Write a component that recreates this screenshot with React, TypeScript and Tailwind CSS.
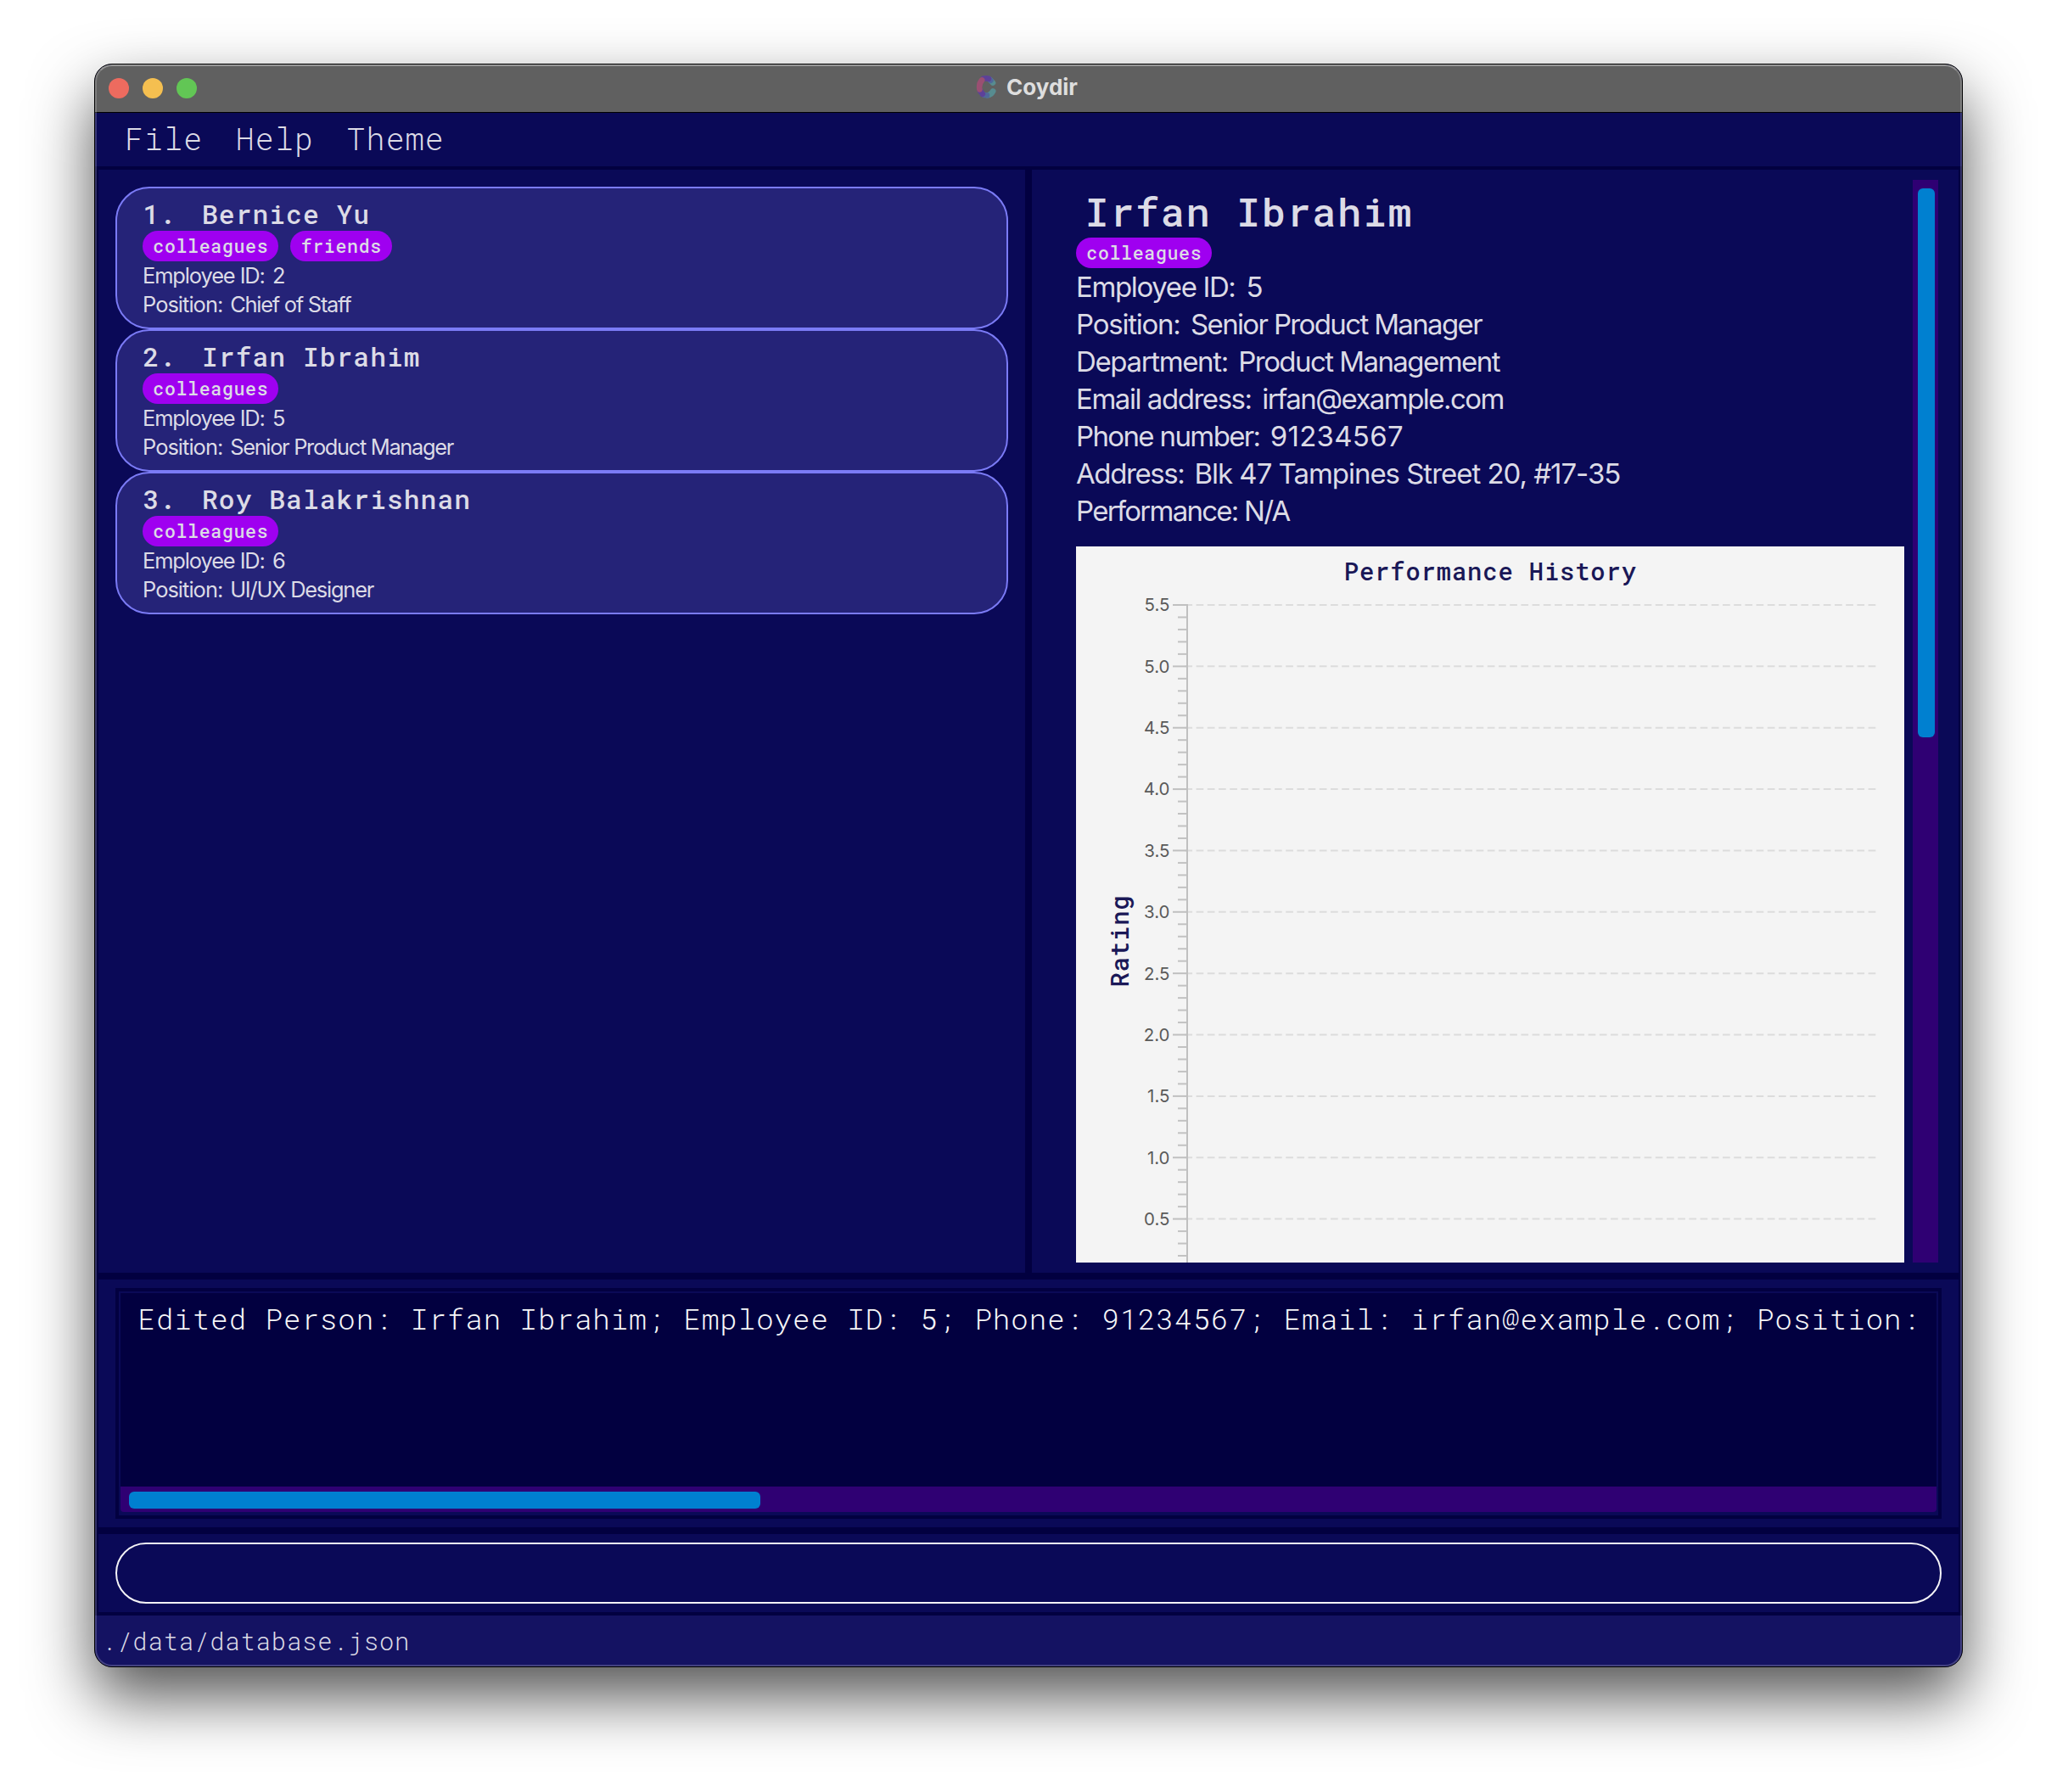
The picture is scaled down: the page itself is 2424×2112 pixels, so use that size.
import React from "react";

const MONO = "font-['Roboto_Mono','Liberation_Mono',monospace]";

type Person = {
  index: string;
  name: string;
  tags: string[];
  id: string;
  position: string;
  positionSpacing: string;
};

const people: Person[] = [
  {
    index: "1.",
    name: "Bernice Yu",
    tags: ["colleagues", "friends"],
    id: "2",
    position: "Chief of Staff",
    positionSpacing: "tracking-[-1.24px]",
  },
  {
    index: "2.",
    name: "Irfan Ibrahim",
    tags: ["colleagues"],
    id: "5",
    position: "Senior Product Manager",
    positionSpacing: "tracking-[-1.31px]",
  },
  {
    index: "3.",
    name: "Roy Balakrishnan",
    tags: ["colleagues"],
    id: "6",
    position: "UI/UX Designer",
    positionSpacing: "tracking-[-1.21px]",
  },
];

const details = [
  { label: "Employee ID:", labelClass: "w-[200.5px] tracking-[-1.37px]", value: "5", valueClass: "" },
  { label: "Position:", labelClass: "w-[135px] tracking-[-1.24px]", value: "Senior Product Manager", valueClass: "tracking-[-1.64px]" },
  { label: "Department:", labelClass: "w-[191.3px] tracking-[-1.36px]", value: "Product Management", valueClass: "tracking-[-1.56px]" },
  { label: "Email address:", labelClass: "w-[219.3px] tracking-[-1.45px]", value: "irfan@example.com", valueClass: "tracking-[-1.56px]" },
  { label: "Phone number:", labelClass: "w-[228.8px] tracking-[-1.63px]", value: "91234567", valueClass: "tracking-[0.27px]" },
  { label: "Address:", labelClass: "w-[139.5px] tracking-[-1.4px]", value: "Blk 47 Tampines Street 20, #17-35", valueClass: "tracking-[-1.03px]" },
  { label: "Performance: N/A", labelClass: "tracking-[-1.75px]", value: "", valueClass: "" },
];

function Tag({ label }: { label: string }) {
  return (
    <span
      className={`${MONO} flex h-9 items-center rounded-full bg-[#9f00f0] pr-[12px] pl-[12.3px] text-[21.5px] leading-none font-medium tracking-[0.7px]`}
    >
      {label}
    </span>
  );
}

function Logo() {
  return (
    <svg width="24" height="27" viewBox="0 0 24 27" fill="none" strokeWidth="6.6" strokeLinecap="round">
      <path d="M17 5.2 L20 8.6" stroke="#578c90" />
      <path d="M15.5 4 L17.4 5.8" stroke="#50689a" />
      <path d="M14 23.2 Q18 22.6 20.2 18.4" stroke="#578c90" />
      <path d="M8.5 22.4 Q10.5 23.4 13 23.3" stroke="#50689a" />
      <path d="M5 18 L7.8 21.8" stroke="#5d4199" />
      <path d="M8.8 3.8 Q12 3 15 3.8" stroke="#5d4199" />
      <path d="M7.2 5.4 Q3.2 9.6 4.4 16.4" stroke="#9a4f72" />
    </svg>
  );
}

function PersonCard({ person }: { person: Person }) {
  return (
    <div className="h-[168px] rounded-[40px] border-2 border-[#7b7bf6] bg-[#252378] px-[30px] py-[10px]">
      <div className={`${MONO} flex h-10 pl-[0.5px] text-[31.2px] leading-[40px] font-medium tracking-[1.1px]`}>
        <span className="w-[69.5px]">{person.index}</span>
        <span>{person.name}</span>
      </div>
      <div className="flex gap-[14px]">
        {person.tags.map((t) => (
          <Tag key={t} label={t} />
        ))}
      </div>
      <div className="flex text-[25.4px] leading-[34px]">
        <span className="w-[153px] tracking-[-1.09px]">Employee ID:</span>
        <span>{person.id}</span>
      </div>
      <div className="flex text-[25.4px] leading-[34px]">
        <span className="w-[103.2px] tracking-[-0.95px]">Position:</span>
        <span className={person.positionSpacing}>{person.position}</span>
      </div>
    </div>
  );
}

const MAJOR = 72.36;
const AXIS_TOP = 69;

function PerformanceChart() {
  const majors = Array.from({ length: 11 }, (_, i) => ({
    y: AXIS_TOP + i * MAJOR,
    label: (5.5 - i * 0.5).toFixed(1),
  }));
  const minors = Array.from({ length: 54 }, (_, i) => i).filter((i) => i % 5 !== 0);
  return (
    <svg width="976" height="844" viewBox="0 0 976 844" className="block bg-[#f4f4f4]">
      <text
        x="315.8"
        y="40"
        className="fill-[#1a1857] font-['Roboto_Mono','Liberation_Mono',monospace] text-[28.8px] font-medium tracking-[0.88px]"
      >
        Performance History
      </text>
      <text
        transform="translate(62 519.5) rotate(-90)"
        x="0"
        y="0"
        className="fill-[#1a1857] font-['Roboto_Mono','Liberation_Mono',monospace] text-[28.8px] font-medium tracking-[0.88px]"
      >
        Rating
      </text>
      {minors.map((i) => (
        <path key={i} d={`M120 ${AXIS_TOP + (i * MAJOR) / 5}H130`} stroke="#c2c2c2" strokeWidth="2" />
      ))}
      {majors.map(({ y, label }) => (
        <g key={label}>
          <path d={`M128.4 ${y}H943`} stroke="#dcdcdc" strokeWidth="2" strokeDasharray="8.7 4.5" />
          <path d={`M114 ${y}H131`} stroke="#c0c0c0" strokeWidth="2" />
          <text x="110.4" y={y + 7.4} textAnchor="end" className="fill-[#5a5a5a] text-[20.4px]">
            {label}
          </text>
        </g>
      ))}
      <path d="M131 68V844" stroke="#c0c0c0" strokeWidth="2" />
    </svg>
  );
}

export default function App() {
  return (
    <div className="h-[2112px] w-[2424px] overflow-hidden bg-white pt-[75px] pl-[111px] font-['Inter',sans-serif] text-[#dcdbe6]">
      <div className="relative flex h-[1890px] w-[2202px] flex-col overflow-hidden rounded-[21px] border border-black bg-[#020040] shadow-[0_35px_75px_rgba(0,0,0,0.68)]">
        {/* Title bar */}
        <div className="relative flex h-[57px] shrink-0 items-center justify-center border-b border-black bg-[#606060] pb-[3px]">
          <div className="absolute top-4 left-4 flex gap-4">
            <span className="size-6 rounded-full bg-[#ed6b5f]" />
            <span className="size-6 rounded-full bg-[#f5bf50]" />
            <span className="size-6 rounded-full bg-[#62c655]" />
          </div>
          <div className="flex items-center gap-3 pr-[4px]">
            <Logo />
            <span className="text-[26px] leading-none font-bold text-[#dedede]">Coydir</span>
          </div>
        </div>

        {/* Menu bar */}
        <div
          className={`${MONO} flex h-[63px] shrink-0 gap-[38.4px] bg-[#0a0957] pb-[3px] pl-[35px] text-[36.4px] leading-[60px] font-light tracking-[1.25px]`}
        >
          <span>File</span>
          <span>Help</span>
          <span>Theme</span>
        </div>

        {/* Person list and detail pane */}
        <div className="mt-1 flex h-[1300px] shrink-0 gap-2 px-1">
          <div className="w-[1092px] bg-[#0a0957] px-5 pt-5">
            {people.map((p) => (
              <PersonCard key={p.index} person={p} />
            ))}
          </div>
          <div className="flex w-[1092px] bg-[#0a0957] py-3 pl-[52px]">
            <div className="w-[976px] overflow-hidden pt-[7px]">
              <div className={`${MONO} h-[61px] pl-[10.4px] text-[47px] leading-[60px] font-medium tracking-[1.55px]`}>
                Irfan Ibrahim
              </div>
              <div className="flex">
                <Tag label="colleagues" />
              </div>
              {details.map((d) => (
                <div key={d.label} className="flex text-[33px] leading-[44px] whitespace-nowrap">
                  <span className={d.labelClass}>{d.label}</span>
                  <span className={d.valueClass}>{d.value}</span>
                </div>
              ))}
              <div className="mt-5">
                <PerformanceChart />
              </div>
            </div>
            <div className="ml-[10px] h-[1276px] w-[30px] bg-[#2f0073] pt-[10px] pl-[6px]">
              <div className="h-[647px] w-5 rounded-[6px] bg-[#0080d0]" />
            </div>
          </div>
        </div>

        {/* Result display */}
        <div className="mx-1 mt-2 h-[292px] shrink-0 bg-[#0a0957] px-5 py-[10px]">
          <div className="h-[272px] border-4 border-[#020040]">
            <div className="flex h-[264px] flex-col overflow-hidden px-[2px] pt-[2px] pb-1">
              <div
                className={`${MONO} h-[228px] overflow-hidden bg-[#020040] pt-2 pl-[20.5px] text-[34px] leading-[44px] font-light tracking-[1.03px] whitespace-nowrap text-[#f6f6f8]`}
              >
                Edited Person: Irfan Ibrahim; Employee ID: 5; Phone: 91234567; Email: irfan@example.com; Position:
              </div>
              <div className="h-[30px] rounded-b-[4px] bg-[#2f0073] pt-[6px] pl-[10px]">
                <div className="h-5 w-[744px] rounded-[6px] bg-[#0080d0]" />
              </div>
            </div>
          </div>
        </div>

        {/* Command box */}
        <div className="mx-1 mt-2 h-[92px] shrink-0 bg-[#0a0957] px-5 py-[10px]">
          <div className="h-[72px] rounded-full border-2 border-[#f3f2f6]" />
        </div>

        {/* Status bar */}
        <div
          className={`${MONO} mt-1 h-[60px] shrink-0 bg-[#141262] pl-[8px] text-[28.8px] leading-[60px] font-light tracking-[0.88px]`}
        >
          ./data/database.json
        </div>

        {/* Window edge highlight */}
        <div className="pointer-events-none absolute inset-0 rounded-[20px] border-2 border-white/20 border-t-white/35" />
      </div>
    </div>
  );
}
